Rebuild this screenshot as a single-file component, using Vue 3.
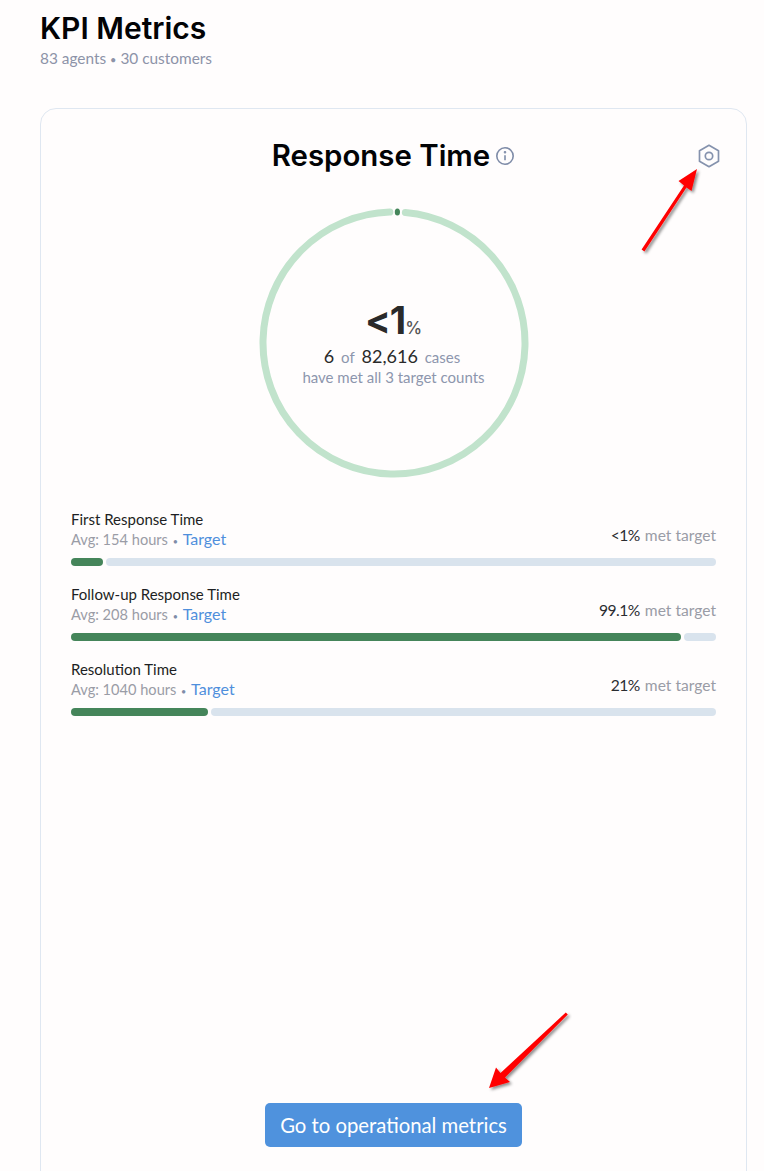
<template>
  <div class="page">
    <h1 class="page-title">KPI Metrics</h1>
    <p class="page-sub">83 agents <span class="bullet">•</span> 30 customers</p>

    <section class="card">
      <header class="card-head">
        <span></span>
        <div class="card-title">
          <h2>Response Time</h2>
          <svg class="info" width="20" height="20" viewBox="0 0 20 20" fill="none" stroke="#7f8ca8" stroke-width="1.6">
            <circle cx="10" cy="10" r="8.2" />
            <path d="M10 9.2v5" />
            <circle cx="10" cy="6.2" r="0.5" fill="#7f8ca8" />
          </svg>
        </div>
        <svg class="settings" width="24" height="24" viewBox="0 0 24 24" fill="none" stroke="#8592ad" stroke-width="1.7" stroke-linejoin="round">
          <path d="M12 1.3l9.5 5.4v10.6L12 22.7l-9.5-5.4V6.7z" />
          <circle cx="12" cy="12" r="3.7" />
        </svg>
      </header>

      <div class="ring">
        <svg width="270" height="270" viewBox="0 0 270 270" fill="none" stroke-width="7" stroke-linecap="round">
          <circle cx="135" cy="135" r="131" stroke="#c1e3cc" :stroke-dasharray="`${circ - 16} 16`" stroke-dashoffset="-8" transform="rotate(-88.5 135 135)" />
          <ellipse cx="138.4" cy="4" rx="2.6" ry="3.6" fill="#45855a" />
        </svg>
        <div class="ring-text">
          <div class="ring-value">&lt;1<small>%</small></div>
          <div class="ring-count"><b>6</b> <i>of</i> <b>82,616</b> <i>cases</i></div>
          <div class="ring-note">have met all 3 target counts</div>
        </div>
      </div>

      <div class="metrics">
        <div v-for="m in metrics" :key="m.name" class="metric">
          <div class="metric-top">
            <div>
              <div class="metric-name">{{ m.name }}</div>
              <div class="metric-avg">Avg: {{ m.avg }} hours <span class="dot">•</span> <a>Target</a></div>
            </div>
            <div class="metric-met"><b>{{ m.label }}</b> <span>met target</span></div>
          </div>
          <div class="bar">
            <div class="bar-fill" :style="{ width: m.fill + '%' }"></div>
            <div class="bar-rest"></div>
          </div>
        </div>
      </div>

      <button class="go">Go to operational metrics</button>
    </section>

    <!-- annotation arrows from the screenshot -->
    <svg class="arrows" width="764" height="1171" viewBox="0 0 764 1171">
      <defs>
        <filter id="sh" x="-30%" y="-30%" width="160%" height="160%">
          <feDropShadow dx="2" dy="2" stdDeviation="1.5" flood-color="#000" flood-opacity="0.45" />
        </filter>
      </defs>
      <g filter="url(#sh)" fill="#f00" stroke="none">
        <path d="M641.6 249.4L684 185.5 678.5 181 697 169 691.5 191 686.5 187.5 644.4 251.4z" />
        <path d="M567.8 1014.6L505 1077.5 510 1082 489 1088 496 1067.5 500.5 1073 565.8 1012.4z" />
      </g>
    </svg>
  </div>
</template>

<script setup>
const circ = 2 * Math.PI * 131

const metrics = [
  { name: 'First Response Time', avg: 154, label: '<1%', fill: 5 },
  { name: 'Follow-up Response Time', avg: 208, label: '99.1%', fill: 94.6 },
  { name: 'Resolution Time', avg: 1040, label: '21%', fill: 21.3 }
]
</script>

<style>
html, body {
  background: #fffdfd;
}
</style>

<style scoped>
.page {
  position: relative;
  height: 1171px;
  overflow: hidden;
  padding: 11px 17px 0 40px;
  box-sizing: border-box;
  font-family: Lato, "Open Sans", sans-serif;
  color: #26282c;
}
.page-title {
  margin: 0;
  font-family: Inter, sans-serif;
  font-size: 30px;
  line-height: 34px;
  font-weight: 600;
  color: #020305;
}
.page-sub {
  margin: 4px 0 0;
  font-size: 15.4px;
  line-height: 18px;
  color: #8d93a8;
}
.bullet {
  font-size: 11px;
}
.card {
  margin-top: 39px;
  height: 1100px;
  box-sizing: border-box;
  border: 1px solid #dfe7f1;
  border-radius: 16px;
  padding: 27px 30px 0;
  display: flex;
  flex-direction: column;
}
.card-head {
  display: grid;
  grid-template-columns: 1fr auto 1fr;
  align-items: center;
}
.card-title {
  display: flex;
  align-items: center;
  gap: 5px;
}
.card-title h2 {
  margin: 0;
  font-family: Inter, sans-serif;
  font-size: 29.4px;
  line-height: 40px;
  font-weight: 600;
  color: #020305;
}
.info {
  margin-top: -1px;
}
.settings {
  justify-self: end;
  margin-right: -5px;
}
.ring {
  position: relative;
  width: 270px;
  height: 270px;
  margin: 32px auto 0;
}
.ring svg {
  display: block;
}
.ring-text {
  position: absolute;
  inset: 0;
  display: flex;
  flex-direction: column;
  align-items: center;
  justify-content: flex-start;
  padding-top: 90px;
}
.ring-value {
  font-family: Inter, sans-serif;
  font-size: 38px;
  line-height: 44px;
  font-weight: 700;
  letter-spacing: -1px;
  color: #2a2a2a;
}
.ring-value small {
  font-size: 17px;
  font-weight: 500;
  letter-spacing: 0;
  color: #555;
}
.ring-count {
  margin-top: -6px;
  font-size: 15px;
  line-height: 24px;
  color: #8d96ad;
}
.ring-count b {
  font-size: 18px;
  font-weight: 400;
  color: #2a2a2a;
}
.ring-count i {
  font-style: normal;
  margin: 0 3px;
}
.ring-note {
  font-size: 15px;
  line-height: 20px;
  margin-top: -2px;
  color: #8d96ad;
}
.metrics {
  margin-top: 33px;
  display: flex;
  flex-direction: column;
  gap: 20px;
}
.metric-top {
  display: flex;
  justify-content: space-between;
  align-items: flex-end;
}
.metric-name {
  margin: -1px 0 1px;
  font-size: 15px;
  line-height: 19px;
  color: #1d1f23;
}
.metric-avg {
  font-size: 14.6px;
  line-height: 19px;
  height: 19px;
  color: #9a9ca6;
}
.metric-avg a {
  font-size: 16px;
  line-height: 1;
  color: #4f8fdc;
}
.dot {
  font-size: 9px;
  line-height: 1;
  margin: 0 1px;
  color: #7f8ca8;
}
.metric-met {
  margin-bottom: 4px;
  font-size: 15.6px;
  line-height: 20px;
  color: #9a9ca6;
}
.metric-met b {
  font-size: 15.6px;
  font-weight: 400;
  letter-spacing: -0.5px;
  color: #2a2c31;
  margin-right: 1px;
}
.bar {
  margin-top: 9px;
  display: flex;
  gap: 3px;
  height: 8px;
}
.bar-fill {
  background: #45855a;
  border-radius: 4px;
}
.bar-rest {
  flex: 1;
  background: #d9e3ed;
  border-radius: 4px;
}
.go {
  align-self: center;
  margin-top: 387px;
  width: 257px;
  height: 44px;
  border: none;
  border-radius: 5px;
  background: #4f92dd;
  color: #fff;
  font-family: Lato, "Open Sans", sans-serif;
  font-size: 20.3px;
}
.arrows {
  position: absolute;
  left: 0;
  top: 0;
  pointer-events: none;
}
</style>
